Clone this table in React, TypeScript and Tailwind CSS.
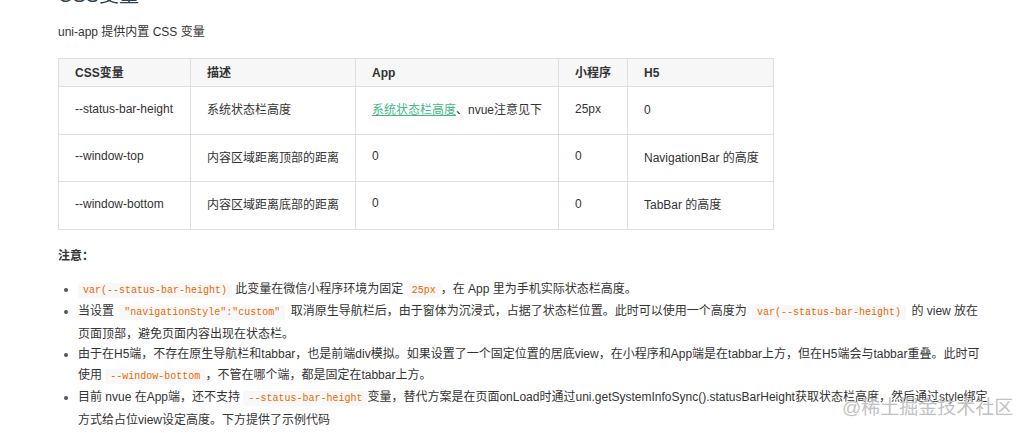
const rows = [
  { name: '--status-bar-height', desc: '系统状态栏高度', app: 'link', mp: '25px', h5: '0' },
  { name: '--window-top', desc: '内容区域距离顶部的距离', app: '0', mp: '0', h5: 'NavigationBar 的高度' },
  { name: '--window-bottom', desc: '内容区域距离底部的距离', app: '0', mp: '0', h5: 'TabBar 的高度' },
];

function Code({ children, className = '' }: { children: React.ReactNode; className?: string }) {
  return (
    <code
      className={`rounded-[2px] bg-[#f8f8f8] px-[5px] py-[2px] font-['Liberation_Mono',monospace] text-[10px] text-[#e96900] ${className}`}
    >
      {children}
    </code>
  );
}

export default function App() {
  return (
    <div className="relative h-[433px] w-[1031px] overflow-hidden bg-white font-['Liberation_Sans','Noto_Sans_CJK_SC',sans-serif] text-[12px] text-[#333]">
      <div className="ml-[58px] w-[931px]">
        {/* Title, mostly scrolled off */}
        <h2 className="mt-[-17px] text-[20px] leading-[24px] text-[#2c3e50]">CSS变量</h2>

        <p className="mt-[15px] leading-[20px]">uni-app 提供内置 CSS 变量</p>

        {/* Variables table */}
        <table className="mt-[16px] border-collapse">
          <colgroup>
            <col className="w-[132px]" />
            <col className="w-[165px]" />
            <col className="w-[203px]" />
            <col className="w-[69px]" />
            <col className="w-[146px]" />
          </colgroup>
          <thead>
            <tr className="h-[28px] bg-[#f7f7f7]">
              {['CSS变量', '描述', 'App', '小程序', 'H5'].map((h) => (
                <th key={h} className="border border-[#dfdfdf] pl-[16px] text-left font-bold">
                  {h}
                </th>
              ))}
            </tr>
          </thead>
          <tbody>
            {rows.map((r) => (
              <tr key={r.name} className="h-[47.5px]">
                <td className="border border-[#dfdfdf] pl-[16px] pb-[3px]">{r.name}</td>
                <td className="border border-[#dfdfdf] pl-[16px]">{r.desc}</td>
                <td className="border border-[#dfdfdf] pl-[16px]">
                  {r.app === 'link' ? (
                    <span>
                      <a className="text-[#42b983] underline">系统状态栏高度</a>、nvue注意见下
                    </span>
                  ) : (
                    <span className="relative top-[-2px]">{r.app}</span>
                  )}
                </td>
                <td className="border border-[#dfdfdf] pl-[16px] pb-[3px]">{r.mp}</td>
                <td className="border border-[#dfdfdf] pl-[16px]">{r.h5}</td>
              </tr>
            ))}
          </tbody>
        </table>

        <p className="mt-[16px] leading-[20px] font-bold">注意：</p>

        <ul className="mt-[13px] list-disc pl-[20px] leading-[20.5px] marker:text-[#555]">
          <li>
            <Code>var(--status-bar-height)</Code> 此变量在微信小程序环境为固定 <Code>25px</Code>，在 App 里为手机实际状态栏高度。
          </li>
          <li>
            当设置 <Code className="mx-[2px]">"navigationStyle":"custom"</Code> 取消原生导航栏后，由于窗体为沉浸式，占据了状态栏位置。此时可以使用一个高度为{' '}
            <Code className="mx-[2px]">var(--status-bar-height)</Code> 的 view 放在页面顶部，避免页面内容出现在状态栏。
          </li>
          <li>
            由于在H5端，不存在原生导航栏和tabbar，也是前端div模拟。如果设置了一个固定位置的居底view，在小程序和App端是在tabbar上方，但在H5端会与tabbar重叠。此时可使用{' '}
            <Code>--window-bottom</Code>，不管在哪个端，都是固定在tabbar上方。
          </li>
          <li>
            目前 nvue 在App端，还不支持 <Code>--status-bar-height</Code>变量，替代方案是在页面onLoad时通过uni.getSystemInfoSync().statusBarHeight获取状态栏高度，然后通过style绑定方式给占位view设定高度。下方提供了示例代码
          </li>
        </ul>
      </div>

      {/* Watermark */}
      <div className="absolute left-[842px] top-[396px] text-[19px] leading-[24px] text-[#c2c2c2]">@稀土掘金技术社区</div>
    </div>
  );
}
